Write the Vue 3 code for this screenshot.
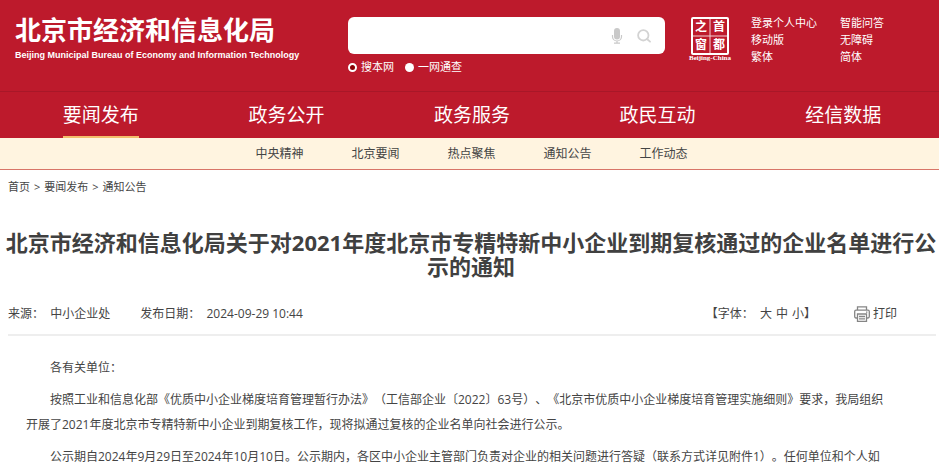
<script setup>
import { ref } from 'vue'

const keyword = ref('')
const scope = ref('site')

const linkColumns = [
  ['登录个人中心', '移动版', '繁体'],
  ['智能问答', '无障碍', '简体']
]
const navItems = ['要闻发布', '政务公开', '政务服务', '政民互动', '经信数据']
const activeNav = ref('要闻发布')
const subItems = ['中央精神', '北京要闻', '热点聚焦', '通知公告', '工作动态']
const sizes = ['大', '中', '小']
</script>

<template>
  <div class="page">
    <header class="header">
      <a class="brand" href="#">
        <span class="brand-name">北京市经济和信息化局</span>
        <span class="brand-en">Beijing Municipal Bureau of Economy and Information Technology</span>
      </a>

      <form class="search" @submit.prevent>
        <div class="search-box">
          <input v-model="keyword" class="search-input" type="text" aria-label="搜索" />
          <button class="icon-button" type="button" aria-label="语音">
            <svg width="12" height="16" viewBox="0 0 12 16">
              <rect x="3" y="0" width="6" height="11.5" rx="3" fill="#c9c9c9" />
              <path d="M1.5 7v1.5a4.5 4.5 0 0 0 9 0V7M6 13v2M3 15.2h6" fill="none" stroke="#c9c9c9" stroke-width="1.2" />
            </svg>
          </button>
          <button class="icon-button" type="submit" aria-label="搜索">
            <svg width="14" height="14" viewBox="0 0 14 14">
              <circle cx="6.3" cy="6.3" r="5.2" fill="none" stroke="#d3d3d3" stroke-width="1.8" />
              <path d="M10 10l3 2.7" stroke="#d3d3d3" stroke-width="1.8" stroke-linecap="round" />
            </svg>
          </button>
        </div>
        <div class="scopes">
          <label class="scope"><input v-model="scope" type="radio" name="scope" value="site" />搜本网</label>
          <label class="scope"><input v-model="scope" type="radio" name="scope" value="all" />一网通查</label>
        </div>
      </form>

      <div class="tools">
        <a class="seal" href="#" aria-label="首都之窗">
          <svg width="44" height="46" viewBox="0 0 44 46">
            <rect x="4" y="2" width="36" height="36" rx="1" fill="none" stroke="#fff" stroke-width="2" />
            <path d="M22 3v34M5 20h34" stroke="#fff" stroke-width="1" opacity="0.8" />
            <g class="seal-text" fill="#fff" text-anchor="middle">
              <text x="13" y="15">之</text>
              <text x="31" y="15">首</text>
              <text x="13" y="33">窗</text>
              <text x="31" y="33">都</text>
            </g>
            <text class="seal-en" x="22" y="44" fill="#fff" text-anchor="middle">Beijing-China</text>
          </svg>
        </a>
        <ul v-for="(column, i) in linkColumns" :key="i" class="links">
          <li v-for="item in column" :key="item"><a href="#">{{ item }}</a></li>
        </ul>
      </div>
    </header>

    <nav class="nav">
      <div v-for="item in navItems" :key="item" class="nav-cell">
        <a href="#" :class="{ active: item === activeNav }" @click.prevent="activeNav = item">{{ item }}</a>
      </div>
    </nav>
    <nav class="subnav">
      <a v-for="item in subItems" :key="item" href="#">{{ item }}</a>
    </nav>

    <div class="crumbs">
      <a href="#">首页</a><span>&gt;</span><a href="#">要闻发布</a><span>&gt;</span><a href="#">通知公告</a>
    </div>

    <main>
      <h1 class="title">北京市经济和信息化局关于对2021年度北京市专精特新中小企业到期复核通过的企业名单进行公示的通知</h1>

      <div class="meta">
        <span class="source">来源：&nbsp; 中小企业处</span>
        <span>发布日期：&nbsp; 2024-09-29 10:44</span>
        <span class="font-size">【字体：&nbsp;
          <span class="sizes"><button v-for="size in sizes" :key="size" type="button">{{ size }}</button></span>】</span>
        <button class="print" type="button">
          <svg width="16" height="16" viewBox="0 0 16 16" fill="none" stroke="#858585" stroke-width="1.3">
            <path d="M3.5 4V.8h9V4M3.5 12H2Q.7 12 .7 10.6V5.6Q.7 4.2 2 4.2h12q1.3 0 1.3 1.4v5q0 1.4-1.3 1.4h-1.5" />
            <path d="M3.5 8h9v7.3h-9zM5 10.5h6M5 12.9h6M12 6.2h1.4" />
          </svg>
          打印
        </button>
      </div>

      <article class="article">
        <p>各有关单位：</p>
        <p>按照工业和信息化部《优质中小企业梯度培育管理暂行办法》（工信部企业〔2022〕63号）、《北京市优质中小企业梯度培育管理实施细则》要求，我局组织开展了2021年度北京市专精特新中小企业到期复核工作，现将拟通过复核的企业名单向社会进行公示。</p>
        <p>公示期自2024年9月29日至2024年10月10日。公示期内，各区中小企业主管部门负责对企业的相关问题进行答疑（联系方式详见附件1）。任何单位和个人如</p>
      </article>
    </main>
  </div>
</template>

<style>
body {
  margin: 0;
  background: #fff;
}
</style>

<style scoped>
.page {
  font-family: 'Open Sans', 'Noto Sans CJK SC', sans-serif;
  font-size: 12px;
  color: #444;
  text-spacing-trim: space-all;
}

a {
  color: inherit;
  text-decoration: none;
}

button {
  padding: 0;
  border: 0;
  background: none;
  font: inherit;
  color: inherit;
  cursor: pointer;
}

.header {
  display: grid;
  grid-template-columns: 348fr 317fr 274fr;
  align-items: start;
  padding-bottom: 16px;
  border-bottom: 1px solid #a81728;
  background: #bd1a2c;
  color: #fff;
}

.brand {
  display: flex;
  flex-direction: column;
  padding: 14px 0 0 15px;
  white-space: nowrap;
}

.brand-name {
  font-size: 26px;
  font-weight: 700;
  line-height: 32px;
}

.brand-en {
  font-family: 'Liberation Sans', Arial, sans-serif;
  font-size: 9px;
  font-weight: 700;
  line-height: 18px;
}

.search {
  padding-top: 17px;
}

.search-box {
  display: flex;
  align-items: center;
  gap: 14px;
  height: 37px;
  padding-right: 14px;
  border-radius: 6px;
  background: #fff;
}

.search-input {
  flex: 1;
  min-width: 0;
  height: 100%;
  padding: 0 12px;
  border: 0;
  outline: none;
  background: none;
  box-sizing: border-box;
}

.icon-button {
  display: flex;
}

.scopes {
  display: flex;
  gap: 11px;
  padding-top: 5px;
}

.scope {
  display: flex;
  align-items: center;
  gap: 4px;
  font-size: 11px;
  line-height: 16px;
}

.scope input {
  appearance: none;
  width: 9px;
  height: 9px;
  margin: 0;
  border-radius: 50%;
  background: #fff;
}

/* Selected scope is drawn as a ring */
.scope input:checked {
  border: 2px solid #fff;
  background: #8a0005;
}

.tools {
  display: flex;
  padding: 14px 0 0 23px;
}

.seal {
  display: flex;
  padding-top: 2px;
  margin-right: 19px;
}

.seal-text {
  font-family: 'Noto Sans CJK SC', sans-serif;
  font-size: 12px;
  font-weight: 700;
}

.seal-en {
  font-family: 'Liberation Serif', serif;
  font-size: 7px;
  font-weight: 700;
}

.links {
  margin: 0 23px 0 0;
  padding: 0;
  list-style: none;
  font-size: 11px;
  line-height: 17px;
  white-space: nowrap;
}

.nav {
  display: grid;
  grid-template-columns: repeat(5, 1fr);
  padding: 0 3px 0 8px;
  background: #bd1a2c;
  color: #fff;
  text-align: center;
}

.nav a {
  display: inline-block;
  font-size: 19px;
  line-height: 46px;
  vertical-align: top;
}

.nav a.active {
  box-shadow: inset 0 -2px #f3bd6c;
}

.subnav {
  display: flex;
  justify-content: center;
  gap: 48px;
  padding-left: 4px;
  border-bottom: 1px solid #d87568;
  background: #fff4e0;
  line-height: 31px;
}

.crumbs {
  display: flex;
  gap: 4px;
  padding: 8px 8px 0;
  font-size: 11px;
  line-height: 18px;
}

.title {
  margin: 34px 2px 0 5px;
  font-size: 22px;
  line-height: 24px;
  text-align: center;
  color: #404040;
}

.meta {
  display: flex;
  align-items: center;
  margin: 0 3px 0 8px;
  padding: 26px 39px 10px 0;
  border-bottom: 2px solid #eee;
  line-height: 20px;
}

.source {
  margin-right: 30px;
}

.font-size {
  margin-left: auto;
}

.sizes {
  display: inline-flex;
  gap: 4px;
}

.print {
  display: flex;
  align-items: center;
  gap: 3px;
  margin-left: 38px;
}

.article {
  padding: 12px 50px 0 26px;
  line-height: 25px;
}

.article p {
  margin: 7px 0;
  text-indent: 2em;
}
</style>
